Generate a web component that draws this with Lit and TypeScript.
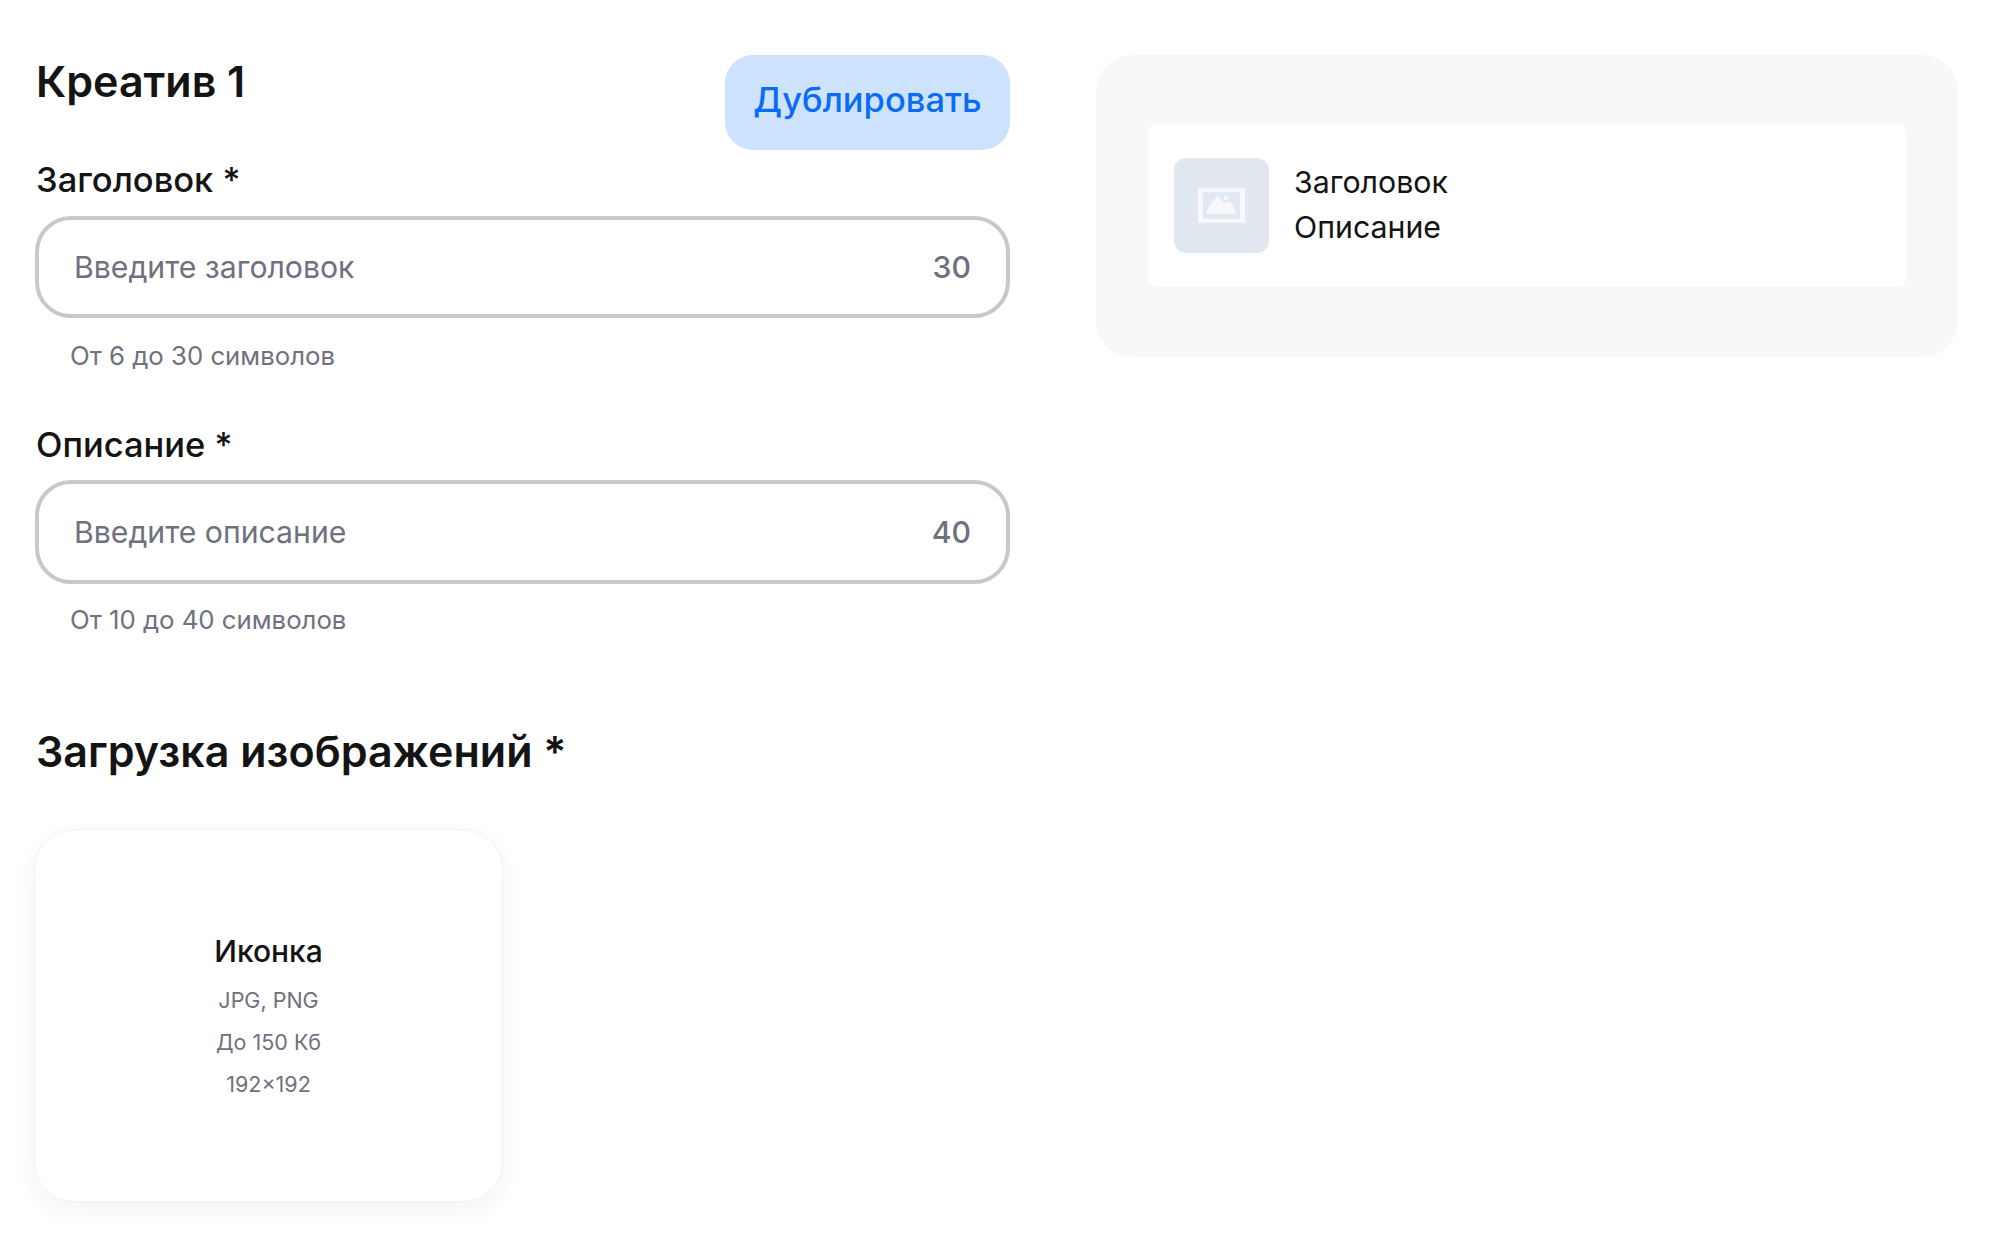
import { LitElement, html, css } from "lit";
import { customElement } from "lit/decorators.js";

@customElement("app-root")
export class AppRoot extends LitElement {
  static styles = css`
    :host { display: block; width: 2000px; height: 1260px; background: #fff; font-family: Inter, "Noto Sans", sans-serif; color: #141414; box-sizing: border-box; overflow: hidden; }
    .page { display: grid; grid-template-columns: 975px 862px; column-gap: 86px; padding: 55px 0 0 35px; align-items: start; }
    .left { display: flex; flex-direction: column; }
    .head { display: flex; justify-content: space-between; align-items: flex-start; height: 95px; }
    h2 { margin: 0; padding-left: 1px; font-size: 43px; line-height: 52px; font-weight: 600; }
    .btn { width: 285px; height: 95px; border: 0; border-radius: 28px; background: #cde3fd; color: #0a6cf5; font: 500 34.5px/40px Inter, sans-serif; padding: 0 0 6px; }
    .label { font-size: 34.5px; line-height: 40px; font-weight: 500; height: 66px; padding: 10px 0 0 1px; box-sizing: border-box; }
    .label.second { height: 65px; }
    .field { height: 102px; border: 4px solid #c6c8cc; border-radius: 36px; box-sizing: border-box; display: flex; justify-content: space-between; align-items: center; padding: 0 35px; color: #6f7080; font-size: 30.2px; line-height: 40px; }
    .field.second { height: 104px; }
    .count { font-weight: 500; }
    .hint { margin: 0 0 0 35px; padding-top: 22px; font-size: 25.75px; line-height: 32px; color: #6f7080; height: 75px; box-sizing: content-box; }
    .hint.second { padding-top: 20px; }
    h3 { margin: 45px 0 0; padding-left: 1px; font-size: 43px; line-height: 54px; font-weight: 600; }
    .upload { margin: 51px 0 0 -1px; width: 469px; height: 373px; padding-top: 4px; border-radius: 40px; background: #fff; border: 1px solid #f2f3f4; box-sizing: border-box; box-shadow: 0 8px 24px rgba(30, 40, 60, .05); display: flex; flex-direction: column; align-items: center; justify-content: center; }
    .upload .t { font-size: 30px; line-height: 40px; font-weight: 500; margin-bottom: 8px; }
    .upload .s { font-size: 21.5px; line-height: 42px; color: #6f7080; }
    .preview { background: #f7f8fa; border-radius: 36px; padding: 69px 52px 70px 52px; }
    .ad { background: #fff; border-radius: 8px; height: 163px; padding: 0 25px 0 26px; display: flex; align-items: center; gap: 25px; box-sizing: border-box; }
    .thumb { width: 95px; height: 95px; border-radius: 12px; background: #e2e8f0; display: flex; align-items: center; justify-content: center; flex: none; }
    .txt { font-size: 30.3px; line-height: 45px; font-weight: 400; margin-top: -1px; }
  `;

  render() {
    return html`<div class="page">
      <div class="left">
        <div class="head"><h2>Креатив 1</h2><button class="btn">Дублировать</button></div>
        <div class="label">Заголовок *</div>
        <div class="field"><span>Введите заголовок</span><span class="count">30</span></div>
        <div class="hint">От 6 до 30 символов</div>
        <div class="label second">Описание *</div>
        <div class="field second"><span>Введите описание</span><span class="count">40</span></div>
        <div class="hint second">От 10 до 40 символов</div>
        <h3>Загрузка изображений *</h3>
        <div class="upload">
          <div class="t">Иконка</div>
          <div class="s">JPG, PNG</div>
          <div class="s">До 150 Кб</div>
          <div class="s">192×192</div>
        </div>
      </div>
      <div class="preview">
        <div class="ad">
          <div class="thumb">
            <svg width="47" height="35" viewBox="0 0 48 35" fill="#f6f8fb"><path fill-rule="evenodd" d="M0 0h48v35H0zM5 4v27h38V4z"/><path d="M8 26C10 20 16 11 20 8c2 1 5 5 7 7 2-1 4-1 5-1 3 2 6 8 7 12z"/><circle cx="28.5" cy="10" r="2.5"/></svg>
          </div>
          <div class="txt"><div>Заголовок</div><div>Описание</div></div>
        </div>
      </div>
    </div>`;
  }
}
